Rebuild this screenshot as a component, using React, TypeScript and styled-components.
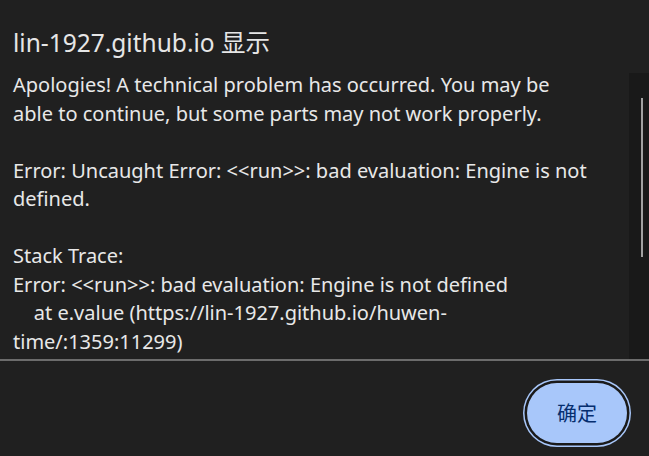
import React from "react";
import styled, { createGlobalStyle } from "styled-components";

const Global = createGlobalStyle`
  html, body { margin: 0; padding: 0; background: #202020; }
  #root { height: 100vh; }
`;

const Dialog = styled.div`
  height: 456px;
  display: flex;
  flex-direction: column;
  background: #202020;
  color: #e6e6e6;
  font-family: "Noto Sans", "Noto Sans CJK SC", sans-serif;
  overflow: hidden;
`;

const Title = styled.h1`
  margin: 26.5px 0 0;
  padding: 0 13px;
  height: 32px;
  font-size: 24.5px;
  line-height: 32px;
  font-weight: 400;
  color: #e6e6e6;
  white-space: nowrap;
`;

const Body = styled.div`
  display: flex;
  margin-top: 12.5px;
  height: 288px;
`;

const Message = styled.div`
  flex: 1;
  min-width: 0;
  overflow: hidden;
  padding: 0.3px 37px 0 13px;
  font-size: 20px;
  line-height: 28.5px;
  white-space: pre-wrap;
  color: #e8e8e8;
`;

const ScrollTrack = styled.div`
  width: 20px;
  margin-top: 2px;
  box-sizing: border-box;
  padding: 25px 0 0 12px;
  background: #191919;
`;

const Thumb = styled.div`
  width: 1.5px;
  height: 159px;
  background: #a2a2a2;
`;

const Divider = styled.div`
  height: 2px;
  flex: none;
  background: #6c6c6c;
`;

const Footer = styled.div`
  flex: 1;
  display: flex;
  justify-content: flex-end;
  align-items: flex-start;
  padding: 22px 22px 0 0;
`;

const ConfirmButton = styled.button`
  width: 100px;
  height: 60px;
  border: none;
  border-radius: 30px;
  background: #a8c7fa;
  color: #062e6f;
  font-family: "Noto Sans CJK SC", "Noto Sans", sans-serif;
  font-size: 20px;
  line-height: 1;
  padding: 0;
  box-shadow: 0 0 0 2.5px #1a1a1a, 0 0 0 4px #a8c7fa;
  cursor: pointer;
`;

const message =
  "Apologies! A technical problem has occurred. You may be able to continue, but some parts may not work properly.\n\n" +
  "Error: Uncaught Error: <<run>>: bad evaluation: Engine is not defined.\n\n" +
  "Stack Trace:\n" +
  "Error: <<run>>: bad evaluation: Engine is not defined\n" +
  "    at e.value (https://lin-1927.github.io/huwen-time/:1359:11299)";

export default function App() {
  return (
    <>
      <Global />
      <Dialog>
        <Title>lin-1927.github.io 显示</Title>
        <Body>
          <Message>{message}</Message>
          <ScrollTrack>
            <Thumb />
          </ScrollTrack>
        </Body>
        <Divider />
        <Footer>
          <ConfirmButton>确定</ConfirmButton>
        </Footer>
      </Dialog>
    </>
  );
}
